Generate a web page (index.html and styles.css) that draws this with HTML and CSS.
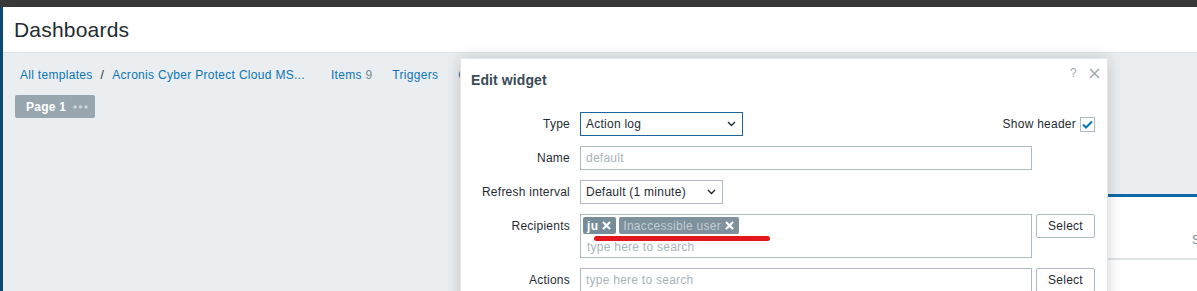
FILE: index.html
```html
<!DOCTYPE html>
<html lang="en">
<head>
    <meta charset="UTF-8">
    <title>Dashboards</title>
    <link rel="stylesheet" href="styles.css">
</head>
<body>
    <div class="topbar"></div>
    <div class="layout">
        <div class="side-strip"></div>
        <main class="main">
            <header class="page-header">
                <h1>Dashboards</h1>
            </header>
            <nav class="breadcrumbs">
                <a class="crumb">All templates</a>
                <span class="sep">/</span>
                <a class="crumb">Acronis Cyber Protect Cloud MS...</a>
                <div class="host-nav">
                    <a class="crumb">Items <span class="count">9</span></a>
                    <a class="crumb">Triggers</a>
                    <a class="crumb">Graphs</a>
                </div>
            </nav>
            <div class="pages">
                <span class="page-tab">Page 1<svg class="dots" width="15" height="4" viewBox="0 0 15 4">
                        <circle cx="2" cy="2" r="1.7" fill="#ccd4d9"/>
                        <circle cx="7.5" cy="2" r="1.7" fill="#ccd4d9"/>
                        <circle cx="13" cy="2" r="1.7" fill="#ccd4d9"/>
                    </svg></span>
            </div>
            <div class="widget">
                <div class="widget-head"><span class="widget-col">Severity</span></div>
            </div>
        </main>
    </div>

    <div class="dialog">
        <div class="dialog-head">
            <h2>Edit widget</h2>
            <div class="dialog-tools">
                <span class="help">?</span>
                <svg class="close" width="11" height="11" viewBox="0 0 11 11">
                    <path d="M1 1 L10 10 M10 1 L1 10" stroke="#a3adb3" stroke-width="1.7" fill="none"/>
                </svg>
            </div>
        </div>
        <div class="form">
            <label class="label">Type</label>
            <div class="field field-split">
                <div class="select select-focus select-type">
                    <span>Action log</span>
                    <svg width="9" height="6" viewBox="0 0 9 6"><path d="M1 1 L4.5 4.5 L8 1" stroke="#1f2c33" stroke-width="1.4" fill="none"/></svg>
                </div>
                <div class="show-header">
                    <span>Show header</span>
                    <span class="checkbox">
                        <svg width="11" height="9" viewBox="0 0 11 9"><path d="M1 4.5 L4 7.5 L10 1.5" stroke="#0275b8" stroke-width="2" fill="none"/></svg>
                    </span>
                </div>
            </div>

            <label class="label">Name</label>
            <div class="field">
                <div class="input input-wide placeholder">default</div>
            </div>

            <label class="label">Refresh interval</label>
            <div class="field">
                <div class="select select-refresh">
                    <span>Default (1 minute)</span>
                    <svg width="9" height="6" viewBox="0 0 9 6"><path d="M1 1 L4.5 4.5 L8 1" stroke="#1f2c33" stroke-width="1.4" fill="none"/></svg>
                </div>
            </div>

            <label class="label">Recipients</label>
            <div class="field field-row">
                <div class="multiselect">
                    <div class="tags">
                        <span class="tag">ju
                            <svg width="9" height="9" viewBox="0 0 9 9"><path d="M1 1 L8 8 M8 1 L1 8" stroke="#fff" stroke-width="2.2" fill="none"/></svg>
                        </span>
                        <span class="tag tag-inaccessible">Inaccessible user
                            <svg width="9" height="9" viewBox="0 0 9 9"><path d="M1 1 L8 8 M8 1 L1 8" stroke="#fff" stroke-width="2.2" fill="none"/></svg>
                        </span>
                    </div>
                    <div class="search placeholder">type here to search</div>
                </div>
                <button class="btn">Select</button>
            </div>

            <label class="label">Actions</label>
            <div class="field field-row">
                <div class="input input-wide placeholder">type here to search</div>
                <button class="btn">Select</button>
            </div>
        </div>
    </div>

    <div class="annotation"></div>
</body>
</html>
```

FILE: styles.css
```css
* {
    box-sizing: border-box;
}
body {
    margin: 0;
    height: 291px;
    overflow: hidden;
    font-family: 'Liberation Sans', Arial, sans-serif;
    font-size: 12px;
    letter-spacing: 0.25px;
    color: #1f2c33;
    background-color: #ebeef0;
}
.topbar {
    height: 7px;
    background-color: #383838;
}
.layout {
    display: flex;
    height: 284px;
}
.side-strip {
    width: 3px;
    background-color: #0b4a72;
}
.main {
    flex: 1;
    position: relative;
    overflow: hidden;
}
.page-header {
    display: flex;
    align-items: center;
    height: 46px;
    padding-left: 11px;
    background-color: #fff;
    border-bottom: 1px solid #dde3e7;
}
h1 {
    margin: 0;
    font-size: 21px;
    font-weight: normal;
    letter-spacing: 0.2px;
}
.breadcrumbs {
    display: flex;
    align-items: center;
    width: 457px;
    height: 18px;
    margin-top: 13px;
    padding-left: 17px;
    overflow: hidden;
    white-space: nowrap;
    letter-spacing: 0.3px;
}
.crumb {
    color: #0a75b8;
}
.sep {
    margin: 0 8px;
}
.host-nav {
    display: flex;
    gap: 20px;
    margin-left: 26px;
}
.count {
    color: #768d99;
}
.pages {
    margin-top: 11px;
    padding-left: 12px;
}
.page-tab {
    display: inline-flex;
    align-items: center;
    height: 23px;
    padding: 0 7px 0 11px;
    background-color: #97a6af;
    border-radius: 2px;
    color: #fff;
    font-weight: bold;
}
.dots {
    margin-left: 7px;
}
.widget {
    position: absolute;
    left: 1102px;
    top: 187px;
    width: 200px;
    height: 120px;
    background-color: #fff;
    border-top: 3px solid #0d6aa6;
}
.widget-head {
    height: 63px;
    padding: 36px 0 0 87px;
    border-bottom: 2px solid #dfe4e7;
}
.widget-col {
    color: #768d99;
}

/* dialog */
.dialog {
    position: absolute;
    left: 460px;
    top: 58px;
    width: 648px;
    height: 300px;
    background-color: #fff;
    border: 1px solid #e3e7ea;
    box-shadow: 0 0 14px rgba(0, 0, 0, 0.18);
}
.dialog-head {
    position: relative;
    height: 42px;
    display: flex;
    align-items: center;
    padding-left: 10px;
}
h2 {
    margin: 0;
    font-size: 14px;
    letter-spacing: 0.1px;
    color: #384b57;
}
.dialog-tools {
    position: absolute;
    top: 7px;
    right: 7px;
    display: flex;
    align-items: center;
    gap: 12px;
}
.help {
    color: #a3adb3;
}
.form {
    display: grid;
    grid-template-columns: 100px 1fr;
    column-gap: 10px;
    row-gap: 10px;
    padding: 11px 15px 0 9px;
}
.label {
    text-align: right;
    line-height: 24px;
}
.field-split {
    display: flex;
    justify-content: space-between;
    align-items: center;
}
.field-row {
    display: flex;
    align-items: flex-start;
    gap: 4px;
}
.select {
    display: flex;
    align-items: center;
    justify-content: space-between;
    height: 24px;
    padding: 0 6px 0 5px;
    border: 1px solid #acbbc4;
}
.select-focus {
    border-color: #1f64a0;
}
.select-type {
    width: 163px;
}
.select-refresh {
    width: 143px;
}
.show-header {
    display: flex;
    align-items: center;
    gap: 4px;
}
.checkbox {
    display: inline-flex;
    align-items: center;
    justify-content: center;
    width: 15px;
    height: 15px;
    border: 1px solid #acbbc4;
}
.input {
    height: 24px;
    line-height: 22px;
    padding: 0 5px;
    border: 1px solid #acbbc4;
}
.input-wide {
    width: 452px;
}
.placeholder {
    color: #a9b4ba;
}
.multiselect {
    width: 452px;
    height: 44px;
    padding: 2px;
    border: 1px solid #acbbc4;
}
.tags {
    display: flex;
    gap: 3px;
}
.tag {
    display: inline-flex;
    align-items: center;
    gap: 4px;
    height: 17px;
    padding: 0 5px 0 4px;
    background-color: #768d99;
    border-radius: 2px;
    color: #fff;
    font-weight: bold;
    letter-spacing: 0.3px;
}
.tag-inaccessible {
    background-color: #7e919d;
    color: #c3ccd2;
    font-weight: normal;
}
.search {
    padding: 4px 0 0 4px;
    line-height: 18px;
}
.btn {
    width: 59px;
    height: 24px;
    padding: 0;
    background-color: #fff;
    border: 1px solid #acbbc4;
    border-radius: 2px;
    font-family: inherit;
    font-size: 12px;
    letter-spacing: 0.25px;
    color: #1f2c33;
}
.annotation {
    position: absolute;
    left: 594px;
    top: 236px;
    width: 176px;
    height: 5px;
    border-radius: 3px;
    background-color: #e3161d;
}
```
